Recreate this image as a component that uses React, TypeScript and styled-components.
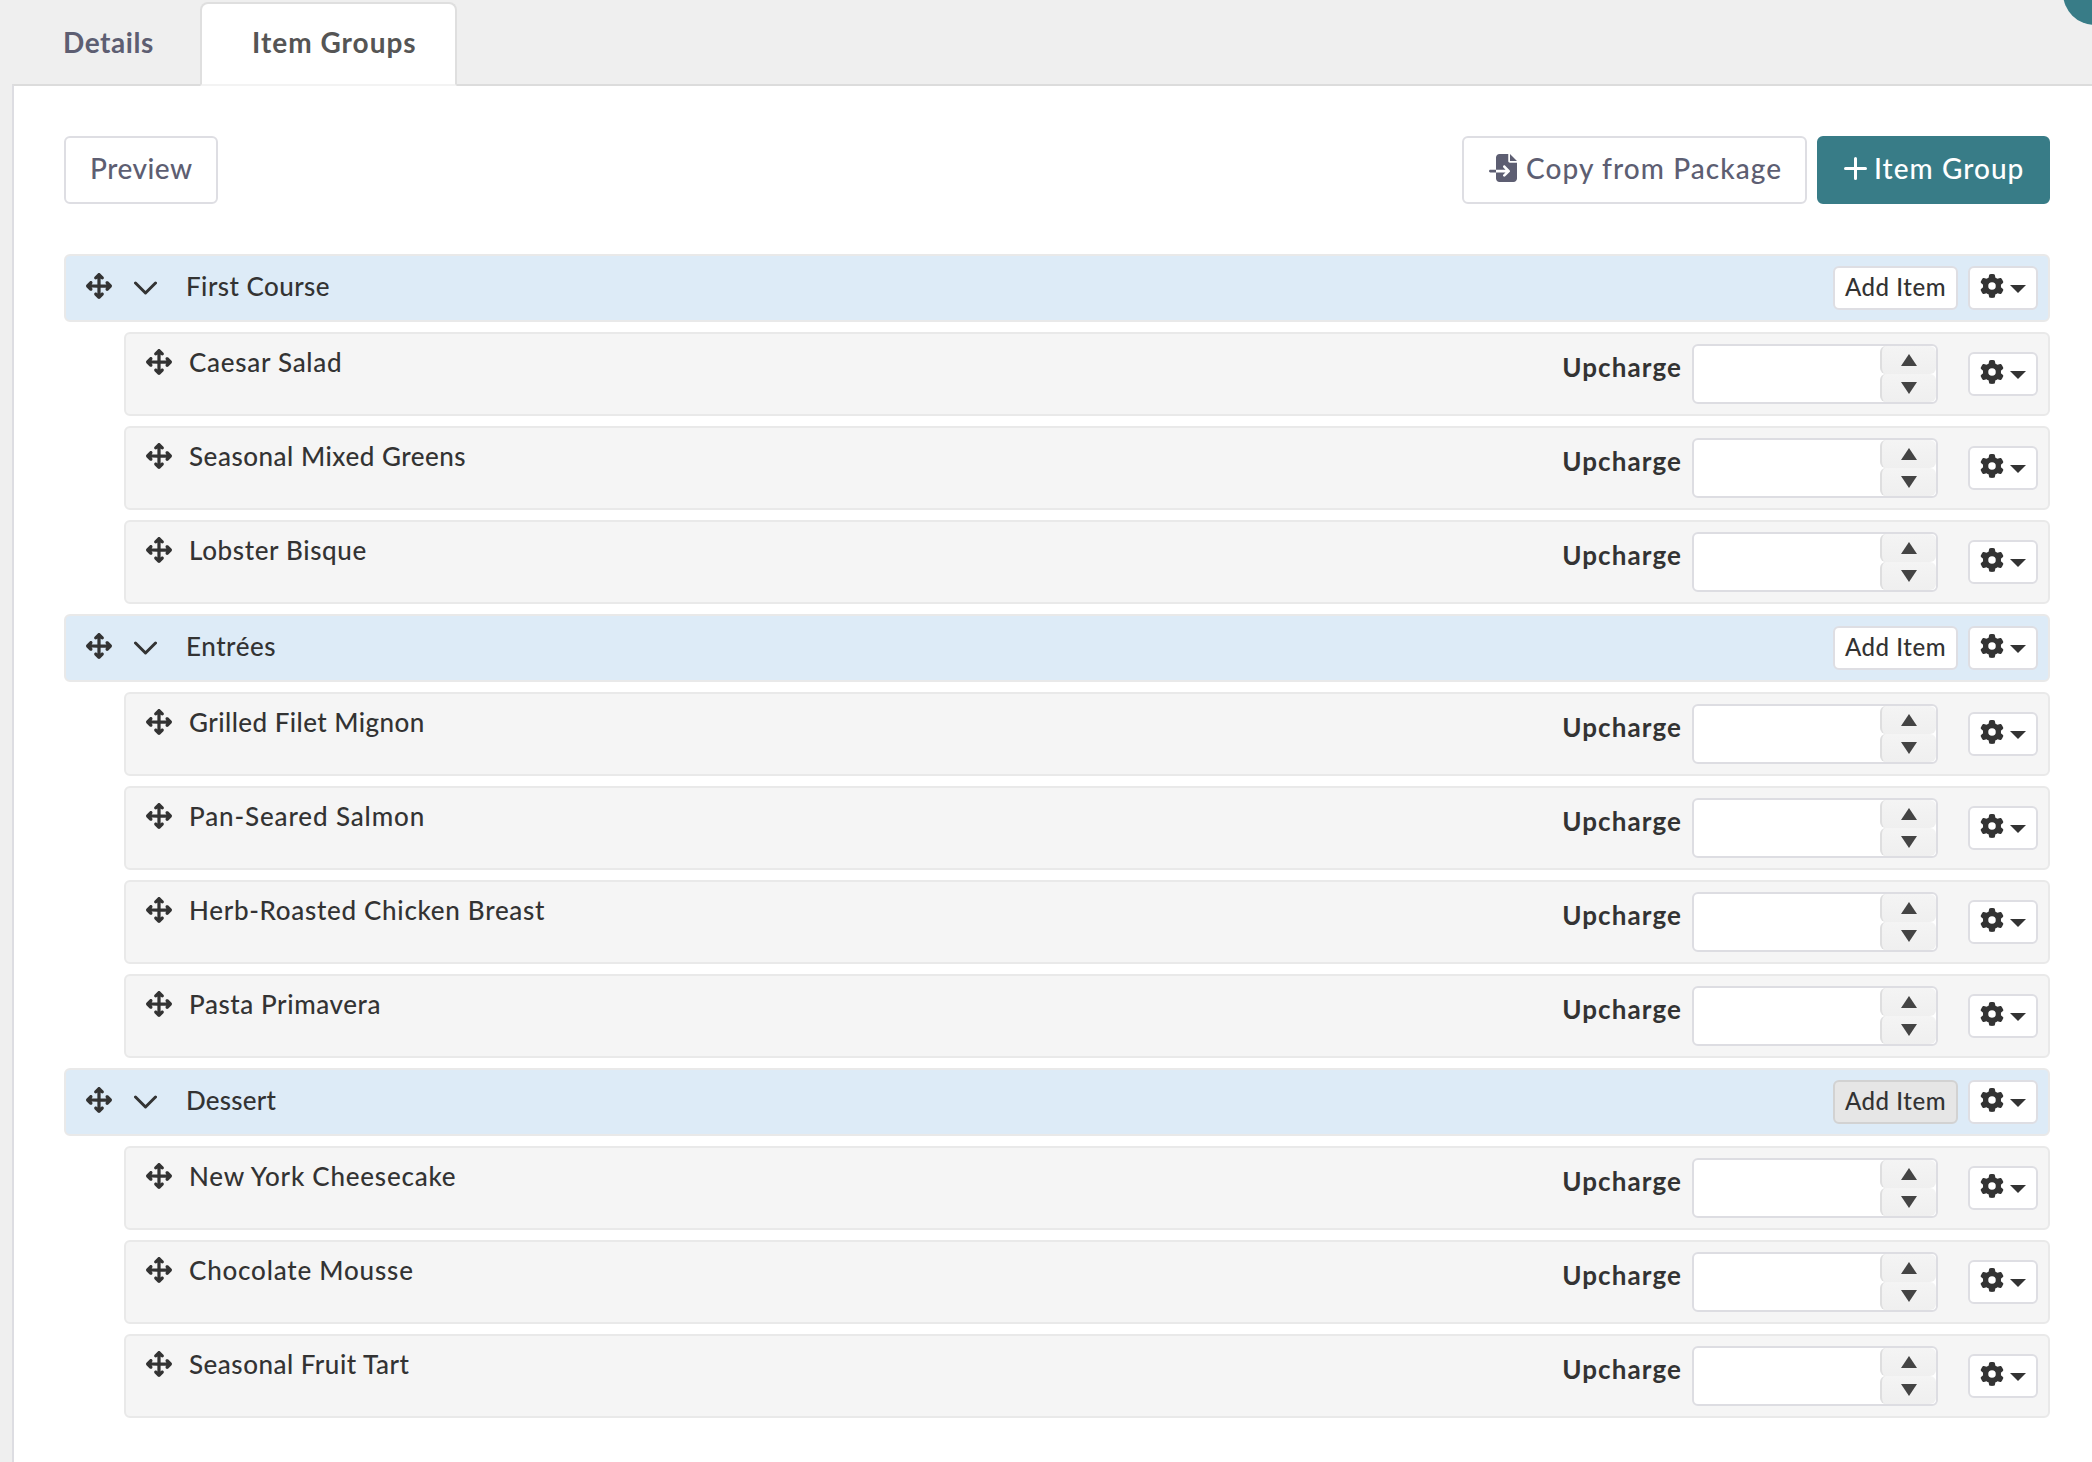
import React from 'react';
import styled, { createGlobalStyle } from 'styled-components';
import { FaArrowsUpDownLeftRight, FaFileImport, FaGear } from 'react-icons/fa6';

const GlobalStyle = createGlobalStyle`
  * { box-sizing: border-box; }
  body {
    margin: 0;
    background: #efefef;
    color: #333;
    font-family: Lato, 'Open Sans', sans-serif;
    font-weight: 500;
    overflow: hidden;
  }
  button {
    font: inherit;
    color: inherit;
    margin: 0;
    padding: 0;
    cursor: pointer;
  }
`;

const Page = styled.div`
  position: relative;
  display: flex;
  flex-direction: column;
  height: 1462px;
  padding-left: 12px;
  overflow: hidden;
`;

const HelpBubble = styled.div`
  position: absolute;
  top: -39px;
  right: -35px;
  width: 64px;
  height: 64px;
  border-radius: 50%;
  background: #387c87;
`;

const TabBar = styled.nav`
  display: flex;
  height: 84px;
  padding-top: 2px;
`;

const Tab = styled.div<{ $active?: boolean; $tracking: number }>`
  position: relative;
  height: 84px;
  padding: 0 0 0 ${p => (p.$active ? 50 : 49)}px;
  width: ${p => (p.$active ? 257 : 188)}px;
  border: 2px solid ${p => (p.$active ? '#dfdfdf' : 'transparent')};
  border-bottom-color: ${p => (p.$active ? '#f3f3f3' : 'transparent')};
  border-radius: 8px 8px 0 0;
  background: ${p => (p.$active ? '#fff' : 'transparent')};
  color: ${p => (p.$active ? '#555' : '#5d5e72')};
  font-size: 28px;
  font-weight: 700;
  line-height: 76px;
  letter-spacing: ${p => p.$tracking}px;
  white-space: nowrap;
  z-index: 1;
`;

const Panel = styled.main`
  flex: 1;
  border-top: 2px solid #dcdcdc;
  border-left: 2px solid #dddde2;
  background: #fff;
  padding: 50px 42px 0 50px;
`;

const Toolbar = styled.div`
  display: flex;
  gap: 10px;
  margin-bottom: 50px;
`;

const Spacer = styled.div`
  flex: 1;
`;

const ToolbarButton = styled.button<{ $primary?: boolean; $width: number; $tracking: number }>`
  display: flex;
  align-items: center;
  width: ${p => p.$width}px;
  height: 68px;
  padding: 0 0 4px 24px;
  border: 2px solid ${p => (p.$primary ? '#387c87' : '#dedee3')};
  border-radius: 6px;
  background: ${p => (p.$primary ? '#387c87' : '#fff')};
  color: ${p => (p.$primary ? '#fff' : '#5d5e72')};
  font-size: 28px;
  letter-spacing: ${p => p.$tracking}px;
  white-space: nowrap;

  svg { flex: none; }
`;

const ImportIcon = styled(FaFileImport)`
  width: 28px;
  height: 28px;
  margin: 0 9px 0 1px;
`;

const PlusIcon = styled.svg`
  width: 23px;
  height: 23px;
  margin: 1px 7px 0 1px;
`;

const GroupList = styled.div`
  display: flex;
  flex-direction: column;
  gap: 10px;
`;

const GroupRow = styled.div`
  display: flex;
  align-items: center;
  height: 68px;
  padding: 0 10px 0 20px;
  border: 2px solid #e9e9e9;
  border-radius: 6px;
  background: #ddebf7;
`;

const ItemRow = styled.div`
  display: flex;
  align-items: flex-start;
  height: 84px;
  margin-left: 60px;
  padding: 10px 10px 0 20px;
  border: 2px solid #e9e9e9;
  border-radius: 6px;
  background: #f5f5f5;
`;

const MoveIcon = styled(FaArrowsUpDownLeftRight)<{ $inItem?: boolean }>`
  flex: none;
  width: 26px;
  height: 26px;
  margin: ${p => (p.$inItem ? '5px 17px 0 0' : '0 22px 4px 0')};
`;

const ChevronIcon = styled.svg`
  flex: none;
  width: 23px;
  height: 14px;
  margin-right: 29px;
`;

const Name = styled.span<{ $inItem?: boolean; $tracking: number }>`
  flex: 1;
  margin: ${p => (p.$inItem ? '2px 0 0' : '0 0 4px')};
  font-size: 26px;
  line-height: 32px;
  letter-spacing: ${p => p.$tracking}px;
  white-space: nowrap;
`;

const SmallButton = styled.button<{ $pressed?: boolean }>`
  height: 44px;
  border: 2px solid ${p => (p.$pressed ? '#d2d2d2' : '#dedee3')};
  border-radius: 6px;
  background: ${p => (p.$pressed ? '#e6e6e6' : '#fff')};
`;

const AddItemButton = styled(SmallButton)`
  width: 125px;
  margin-right: 10px;
  padding-bottom: 3px;
  font-size: 24px;
  line-height: 36px;
  letter-spacing: 0.55px;
  white-space: nowrap;
`;

const GearButton = styled(SmallButton)<{ $inItem?: boolean }>`
  display: flex;
  align-items: center;
  width: 70px;
  padding-left: 10px;
  margin-top: ${p => (p.$inItem ? 8 : 0)}px;
`;

const GearIcon = styled(FaGear)`
  width: 24px;
  height: 24px;
  margin: 0 6px 4px 0;
`;

const Triangle = styled.svg<{ $w: number; $h: number }>`
  display: block;
  width: ${p => p.$w}px;
  height: ${p => p.$h}px;
  fill: currentColor;
`;

const Caret = styled(Triangle)`
  margin-top: 1px;
`;

const UpchargeLabel = styled.label`
  margin: 7px 10px 0 0;
  font-size: 26px;
  font-weight: 700;
  line-height: 32px;
  letter-spacing: 1.1px;
`;

const NumberField = styled.div`
  display: flex;
  width: 246px;
  height: 60px;
  margin-right: 30px;
  border: 2px solid #dddde2;
  border-radius: 6px;
  background: #fff;
`;

const NumberInput = styled.input`
  width: 186px;
  border: 0;
  padding: 0;
  outline: 0;
  background: transparent;
`;

const Spinner = styled.div`
  display: flex;
  flex-direction: column;
  width: 56px;
  color: #444;
`;

const Step = styled.button`
  display: flex;
  flex: 1;
  align-items: center;
  justify-content: center;
  border: 0;
  border-left: 2px solid #dededf;
  border-radius: 6px;
  background: linear-gradient(#f4f4f4, #efefef);
`;

type Item = { name: string; tracking: number };
type Group = Item & { items: Item[]; pressed?: boolean };

const groups: Group[] = [
  {
    name: 'First Course',
    tracking: 0.45,
    items: [
      { name: 'Caesar Salad', tracking: 0.72 },
      { name: 'Seasonal Mixed Greens', tracking: 0.52 },
      { name: 'Lobster Bisque', tracking: 0.63 },
    ],
  },
  {
    name: 'Entrées',
    tracking: 0.55,
    items: [
      { name: 'Grilled Filet Mignon', tracking: 0.46 },
      { name: 'Pan-Seared Salmon', tracking: 0.87 },
      { name: 'Herb-Roasted Chicken Breast', tracking: 0.7 },
      { name: 'Pasta Primavera', tracking: 0.58 },
    ],
  },
  {
    name: 'Dessert',
    tracking: 0.2,
    pressed: true,
    items: [
      { name: 'New York Cheesecake', tracking: 0.77 },
      { name: 'Chocolate Mousse', tracking: 0.8 },
      { name: 'Seasonal Fruit Tart', tracking: 0.5 },
    ],
  },
];

function SettingsMenu({ inItem }: { inItem?: boolean }) {
  return (
    <GearButton $inItem={inItem} aria-label="Settings">
      <GearIcon />
      <Caret $w={16} $h={8} viewBox="0 0 16 8">
        <path d="M0 0h16L8 8z" />
      </Caret>
    </GearButton>
  );
}

function ItemLine({ name, tracking }: Item) {
  return (
    <ItemRow>
      <MoveIcon $inItem />
      <Name $inItem $tracking={tracking}>{name}</Name>
      <UpchargeLabel>Upcharge</UpchargeLabel>
      <NumberField>
        <NumberInput />
        <Spinner>
          <Step aria-label="Increase">
            <Triangle $w={16} $h={12} viewBox="0 0 16 12"><path d="M8 0l8 12H0z" /></Triangle>
          </Step>
          <Step aria-label="Decrease">
            <Triangle $w={16} $h={12} viewBox="0 0 16 12"><path d="M0 0h16L8 12z" /></Triangle>
          </Step>
        </Spinner>
      </NumberField>
      <SettingsMenu inItem />
    </ItemRow>
  );
}

export default function App() {
  return (
    <>
      <GlobalStyle />
      <Page>
        <TabBar>
          <Tab $tracking={0.57}>Details</Tab>
          <Tab $active $tracking={1}>Item Groups</Tab>
        </TabBar>
        <Panel>
          <Toolbar>
            <ToolbarButton $width={154} $tracking={0.52}>Preview</ToolbarButton>
            <Spacer />
            <ToolbarButton $width={345} $tracking={1.08}>
              <ImportIcon />
              Copy from Package
            </ToolbarButton>
            <ToolbarButton $primary $width={233} $tracking={1.05}>
              <PlusIcon viewBox="0 0 23 23" fill="none" stroke="currentColor" strokeWidth="3" strokeLinecap="round">
                <path d="M11.5 1.5v20M1.5 11.5h20" />
              </PlusIcon>
              Item Group
            </ToolbarButton>
          </Toolbar>
          <GroupList>
            {groups.map(group => (
              <React.Fragment key={group.name}>
                <GroupRow>
                  <MoveIcon />
                  <ChevronIcon viewBox="0 0 23 14" fill="none" stroke="currentColor" strokeWidth="3" strokeLinecap="round" strokeLinejoin="round">
                    <path d="M1.5 2l10 10 10-10" />
                  </ChevronIcon>
                  <Name $tracking={group.tracking}>{group.name}</Name>
                  <AddItemButton $pressed={group.pressed}>Add Item</AddItemButton>
                  <SettingsMenu />
                </GroupRow>
                {group.items.map(item => (
                  <ItemLine key={item.name} {...item} />
                ))}
              </React.Fragment>
            ))}
          </GroupList>
        </Panel>
        <HelpBubble />
      </Page>
    </>
  );
}
